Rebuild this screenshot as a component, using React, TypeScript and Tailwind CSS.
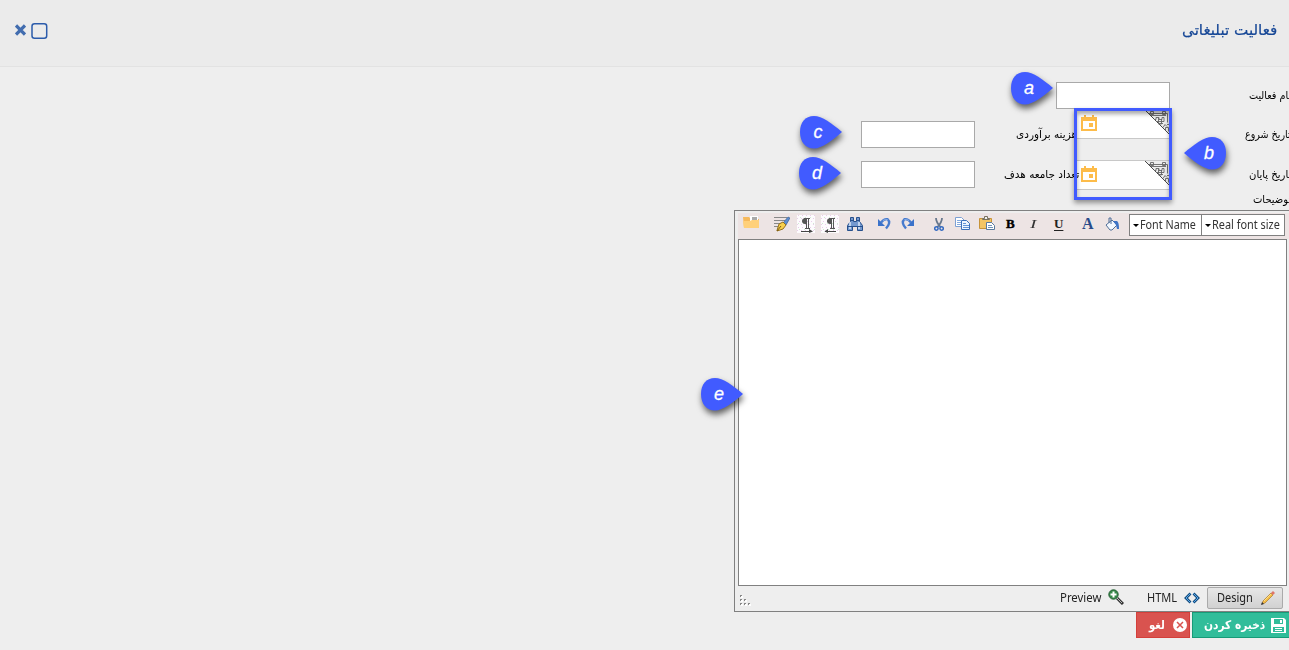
import React, { useLayoutEffect, useRef } from "react";

/* Persian or Latin text squeezed to a known line width. */
function Fit({ width, className = "", rtl = false, children }: { width: number; className?: string; rtl?: boolean; children: string }) {
  const ref = useRef<HTMLSpanElement>(null);
  useLayoutEffect(() => {
    const el = ref.current;
    if (el) el.style.transform = `scaleX(${width / el.offsetWidth})`;
  }, [width]);
  return (
    <span className="flex shrink-0" style={{ width }} dir="ltr">
      <span ref={ref} dir={rtl ? "rtl" : "ltr"} className={`shrink-0 origin-left whitespace-nowrap ${className}`}>
        {children}
      </span>
    </span>
  );
}

const fa = "font-['DejaVu_Sans',sans-serif]";

function Label({ width, children }: { width: number; children: string }) {
  return (
    <Fit rtl width={width} className={`${fa} text-[11px] leading-[15px] text-black`}>
      {children}
    </Fit>
  );
}

function Input() {
  return <input className="h-[27px] w-[114px] shrink-0 border border-[#a9a9a9] bg-white outline-none" />;
}

function DateField({ className = "" }: { className?: string }) {
  return (
    <div className={`flex h-[30px] w-[93px] items-start justify-between border-y border-[#c8c8c8] bg-white ${className}`}>
      <svg className="ml-1 mt-[5px]" width="16" height="16" viewBox="0 0 16 16">
        <path fill="#fdbc4a" fillRule="evenodd" d="M0 2h3V0h2v2h6V0h2v2h3v14H0zM2 6v8h12V6zM8 8h4v4H8z" />
      </svg>
      <svg width="25" height="25" viewBox="0 0 25 25" fill="none" stroke="#666" strokeWidth=".9">
        <path d="M0 0H25V25z" fill="#ececec" stroke="none" />
        <path d="M0 0 25 25" stroke="#333" />
        <path d="M4 3.500h18.500v9M6 5.500h15M5.500 1.500h3v3h-3zM17.500 1.500h3v3h-3zM9 9.500h2v-2h3v2h3v-2h2v4h-8M13.500 8v5M16.500 9v5h-3M13 13.500h5M18 17.500l2-3 2 2M20.500 20.500v-3h3v4M22 14.500h2" />
      </svg>
    </div>
  );
}

function Pin({ letter, flip = false, className }: { letter: string; flip?: boolean; className: string }) {
  return (
    <div className={`absolute h-[34px] w-[42px] ${className}`}>
      <svg
        className={flip ? "absolute inset-0 -scale-x-100 overflow-visible drop-shadow-[-1px_4px_3px_rgba(0,0,0,0.6)]" : "absolute inset-0 overflow-visible drop-shadow-[1px_4px_3px_rgba(0,0,0,0.6)]"}
        width="42"
        height="34"
        viewBox="0 0 42 34"
      >
        <path fill="#415bff" d="M42 16C32 24.500 22 32.500 14 32.500C5 32.500 0 25.500 0 16C0 6.500 5 0 14 0C22 0 32 7.500 42 16Z" />
      </svg>
      <span
        className={`absolute top-[6px] w-5 text-center font-['Liberation_Sans',sans-serif] text-[18px] italic leading-[20px] text-white [-webkit-text-stroke:0.3px_white] ${flip ? "left-[15px]" : "left-[8px]"}`}
      >
        {letter}
      </span>
    </div>
  );
}

function Folder() {
  return (
    <svg width="17" height="14" viewBox="0 0 17 14">
      <path fill="#f6b95b" d="M0 1h6l2 2h8v9H1z" />
      <path fill="#fff" d="M7 0h8v5H7z" />
      <path fill="#aaa" d="M9 1h5v3H9z" />
      <path fill="#ffd07a" d="M0 5h7l2-1h7v8H1z" />
    </svg>
  );
}
function FormatPen() {
  return (
    <svg width="16" height="16" viewBox="0 0 16 16">
      <path stroke="#888" d="M0 1.500h13M0 4.500h11M0 7.500h7M0 10.500h4" />
      <path fill="#5d8ed0" stroke="#294f88" strokeWidth=".6" d="M9 7 14 1l2 1-4 7z" />
      <path fill="#f7cf4c" stroke="#95701c" d="M3 14.500 5 8l4-2 3 3-3 4-6 2z" />
      <path stroke="#7b5a12" d="m3 15 4-5" />
    </svg>
  );
}
function Paragraph({ rtl = false }: { rtl?: boolean }) {
  return (
    <svg width="18" height="18" viewBox="0 0 18 18">
      <path fill="#fdfbfd" d="M0 0h18v18H0z" />
      <path stroke="#e8cdea" strokeDasharray="1 3" d="M1 .5h17M0 3.500h18M2 6.500h16M0 9.500h18M1 12.500h17M0 15.500h18" />
      <path stroke="#cfead2" strokeDasharray="1 4" d="M3 2.500h15M1 8.500h17M2 14.500h16" />
      <g transform={rtl ? "translate(1 0)" : undefined}>
        <path fill="#555" d="M9 3v6H8Q5 8.500 5 6T8 3z" />
        <path stroke="#555" d="M7 3.500h6M9.500 3v10M11.500 3v10M8 13.500h5" />
      </g>
      <path stroke="#444" d="M4 16.500h11" />
      <path fill="#444" d={rtl ? "M3.500 16.500 7 14v4z" : "M16 16.500 12 14v4z"} />
    </svg>
  );
}
function Binoculars() {
  return (
    <svg width="16" height="14" viewBox="0 0 16 14">
      <path fill="#7398cf" stroke="#28508c" d="M3.500.5h3v4h3v-4h3v4l3 4v5h-5v-4h-5v4h-5v-5l3-4z" />
      <path stroke="#dbe8fa" strokeWidth="1.500" d="M3 5v7M12 5v7" />
      <path stroke="#28508c" d="M1 9.500h5M10 9.500h5M3 3.500h4M9 3.500h4" />
    </svg>
  );
}
function Turn({ redo = false }: { redo?: boolean }) {
  return (
    <svg width="13" height="13" viewBox="0 0 13 13" className={redo ? "-scale-x-100" : ""}>
      <path fill="none" stroke="#477bce" strokeWidth="2.400" d="M3 5.500Q6 1.500 9.500 2.200Q13.500 5.500 8 11.500" />
      <path fill="#3b72ca" d="M0 2v7h7z" />
      <path fill="none" stroke="#8db1e7" d="M5 3.500Q8 1.500 10 3" />
    </svg>
  );
}
function Scissors() {
  return (
    <svg width="10" height="15" viewBox="0 0 10 15" fill="none">
      <path stroke="#68788d" strokeWidth="1.800" d="M2 1q0 4 4.500 9M8 1q0 4-4.500 9" />
      <circle cx="2.400" cy="11.500" r="1.700" stroke="#3269c1" strokeWidth="1.500" />
      <circle cx="7.600" cy="11.500" r="1.700" stroke="#3269c1" strokeWidth="1.500" />
    </svg>
  );
}
function Copy() {
  return (
    <svg width="16" height="13" viewBox="0 0 16 13">
      <path fill="#fff" stroke="#7da0d3" d="M.5.5h6l3 3v6h-9z" />
      <path stroke="#83a9de" d="M2 3.500h4M2 5.500h5M2 7.500h5" />
      <path fill="#eff6ff" stroke="#3c70b9" d="M6.500 3.500h5l3 3v6h-8z" />
      <path stroke="#6594d5" d="M8 6.500h3M8 8.500h6M8 10.500h6" />
    </svg>
  );
}
function Paste() {
  return (
    <svg width="17" height="15" viewBox="0 0 17 15">
      <path fill="#f4c564" stroke="#c79338" d="M.5 2.500h12v10H.5z" />
      <path fill="#eee" stroke="#77715f" d="M3.500 3.500v-1h2v-2h3v2h2v1z" />
      <path fill="#fff" stroke="#58799e" d="M7.500 6.500h5l3 3v4h-8z" />
      <path stroke="#7093ba" d="M9 9.500h4M9 11.500h5" />
    </svg>
  );
}
function Bucket() {
  return (
    <svg width="14" height="14" viewBox="0 0 14 14">
      <path fill="#f3f8ff" stroke="#506f98" d="m1 8 6-5 5 5-5 5H5z" />
      <path stroke="#4c6d98" fill="none" d="M4 6V1h2v6" />
      <path fill="#3f74c6" d="M8 4h4q2 1 2 8h-2L11 8z" />
    </svg>
  );
}

function Select({ width, children, className }: { width: number; children: string; className: string }) {
  return (
    <div className={`flex h-[22px] items-center border border-[#808080] bg-white pl-[3px] ${className}`}>
      <span className="mr-px mt-px border-x-[3px] border-t-[3px] border-x-transparent border-t-black" />
      <Fit width={width} className="font-['Noto_Sans',sans-serif] text-[12.5px] leading-[18px] text-[#333]">{children}</Fit>
    </div>
  );
}

function Toolbar() {
  const serif = "font-['Liberation_Serif',serif] font-bold leading-[14px]";
  return (
    <div className="flex h-[26px] items-center bg-[#ede4e4] pl-[5px]">
      <div className="mr-[14px] -mt-[6px]"><Folder /></div>
      <div className="mr-[7px] -mt-[5px]"><FormatPen /></div>
      <div className="mr-[6px] -mt-1"><Paragraph /></div>
      <div className="mr-[8px] -mt-1"><Paragraph rtl /></div>
      <div className="mr-[15px] -mt-[5px]"><Binoculars /></div>
      <div className="mr-[10px] -mt-[5px]"><Turn /></div>
      <div className="mr-[20px] -mt-[5px]"><Turn redo /></div>
      <div className="mr-[11px] -mt-1"><Scissors /></div>
      <div className="mr-[8px] -mt-[5px]"><Copy /></div>
      <div className="mr-[10px] -mt-[5px]"><Paste /></div>
      <span className={`mr-[15px] -mt-1 w-[9px] text-[13px] text-black [-webkit-text-stroke:0.4px_black] ${serif}`}>B</span>
      <span className={`mr-[15px] -mt-1 w-[9px] text-[13px] italic text-[#333] ${serif}`}><span className="inline-block origin-left scale-x-150 font-normal">I</span></span>
      <span className={`mr-[19px] -mt-1 w-[9px] text-[13px] text-[#222] underline underline-offset-2 ${serif}`}>U</span>
      <span className={`mr-[11px] -mt-1 w-[12px] text-[16px] text-[#294b89] ${serif}`}>A</span>
      <div className="mr-[10px] -mt-1 w-[14px]"><Bucket /></div>
      <Select className="-mt-[2px] w-[73px] shrink-0" width={56}>Font Name</Select>
      <Select className="-ml-px -mt-[2px] w-[84px] shrink-0" width={68}>Real font size</Select>
    </div>
  );
}

function EditorFooter() {
  const text = "font-['Noto_Sans',sans-serif] text-[12.5px] leading-[18px] text-[#222]";
  return (
    <div className="flex h-[24px] items-center">
      <svg className="ml-[2px] mt-[4px]" width="11" height="11" viewBox="0 0 11 11">
        <path fill="#fff" d="M1 1h2v2H1zM1 5h2v2H1zM5 5h2v2H5zM1 9h2v2H1zM5 9h2v2H5zM9 9h2v2H9z" />
        <path fill="#888" d="M0 0h2v1H1v1H0zM0 4h2v1H1v1H0zM4 4h2v1H5v1H4zM0 8h2v1H1v1H0zM4 8h2v1H5v1H4zM8 8h2v1H9v1H8z" />
      </svg>
      <div className="ml-[309px] flex items-center">
        <Fit width={41} className={text}>Preview</Fit>
        <svg className="-mt-[2px] ml-[7px] mr-[23px]" width="16" height="16" viewBox="0 0 16 16">
          <path stroke="#333" strokeWidth="3" d="m9 9 6 6" /><path stroke="#bbb" d="m9 9 5 5" />
          <circle cx="5.500" cy="5.500" r="4.700" fill="#368849" stroke="#276035" />
          <path stroke="#fff" strokeWidth="2" d="M2.500 5.500h6M5.500 2.500v6" />
        </svg>
        <Fit width={30} className={text}>HTML</Fit>
        <svg className="ml-[7px] mr-[7px]" width="16" height="12" viewBox="0 0 16 12" fill="none">
          <path stroke="#164e80" strokeWidth="2.800" d="M6.500 1.500 2 6l4.500 4.500M9.500 1.500 14 6l-4.500 4.500" /><path stroke="#57a7e8" strokeWidth="1" d="M6.500 1.500 2 6l4.500 4.500M9.500 1.500 14 6l-4.500 4.500" />
        </svg>
        <div className="flex h-[22px] w-[76px] items-center rounded-[2px] border border-[#aaa] bg-linear-to-b from-[#e7e7e7] to-[#d1d1d1] pl-[9px]">
          <Fit width={36} className={text}>Design</Fit>
          <svg className="ml-[8px]" width="14" height="14" viewBox="0 0 14 14">
            <path fill="#f4bd45" stroke="#a97931" strokeWidth=".7" d="M2 10 10 2l2 2-8 8-3 1z" />
            <path fill="#df7569" d="m10 2 2-2 2 2-2 2z" /><path fill="#333" d="m0 14 1-3 2 2z" />
            <path stroke="#ffe18a" d="m3 10 7-7" />
          </svg>
        </div>
      </div>
    </div>
  );
}

export default function App() {
  return (
    <div className="relative h-[650px] w-[1289px] overflow-hidden bg-[#eeeeee]">
      <header className="flex h-[67px] items-start justify-between border-b border-[#e2e2e2] bg-[#ebebeb]">
        <div className="flex pl-[15px] pt-[23px]">
          <svg className="mt-px" width="11" height="12" viewBox="0 0 11 12"><path stroke="#426daf" strokeWidth="3.200" d="m1 1.500 9 9M10 1.500l-9 9" /></svg>
          <svg className="ml-[5px]" width="17" height="16" viewBox="0 0 17 16"><rect x="1" y=".8" width="14.700" height="14.400" rx="2.500" fill="none" stroke="#2c5cab" strokeWidth="1.500" /></svg>
        </div>
        <div className="pr-[12px] pt-[19px]">
          <Fit rtl width={95} className={`${fa} text-[15px] leading-[22px] text-[#164796] [-webkit-text-stroke:0.2px_#164796]`}>فعالیت تبلیغاتی</Fit>
        </div>
      </header>

      <main>
        <div className="flex flex-col pt-[15px]">
          <div className="flex h-[27px] items-center pl-[1056px]">
            <Input />
            <div className="ml-[79px] shrink-0"><Label width={42}>نام فعالیت</Label></div>
          </div>
          <div className="mt-[12px] flex h-[27px] items-center pl-[861px]">
            <Input />
            <div className="ml-[41px] shrink-0"><Label width={61}>هزینه برآوردی</Label></div>
            <DateField className="-mt-[22px] shrink-0" />
            <div className="ml-[75px] shrink-0"><Label width={46}>تاریخ شروع</Label></div>
          </div>
          <div className="mt-[13px] flex h-[27px] items-center pl-[861px]">
            <Input />
            <div className="ml-[29px] shrink-0"><Label width={75}>تعداد جامعه هدف</Label></div>
            <DateField className="-ml-[2px] shrink-0" />
            <div className="ml-[79px] shrink-0"><Label width={42}>تاریخ پایان</Label></div>
          </div>
          <div className="mb-[3px] mt-[3px] flex h-[16px] items-center pl-[1253px]">
            <Label width={38}>توضیحات</Label>
          </div>
        </div>

        <section className="ml-[734px] h-[402px] w-[560px] border border-[#808080] pl-[3px] pt-[2px]">
          <Toolbar />
          <div className="h-[347px] w-[549px] border border-[#808080] bg-white" />
          <EditorFooter />
        </section>

        <div className="flex gap-[2px] pl-[1136px]">
          <button className="flex h-[26px] w-[54px] shrink-0 items-center border border-[#d43f3a] bg-[#d9534f] pl-[12px]">
            <Fit rtl width={16} className={`${fa} text-[12px] font-bold leading-[18px] text-white`}>لغو</Fit>
            <svg className="ml-[8px] shrink-0" width="14" height="14" viewBox="0 0 14 14">
              <circle cx="7" cy="7" r="7" fill="#fff" /><path stroke="#d9534f" strokeWidth="1.500" d="m4 4 6 6M10 4l-6 6" />
            </svg>
          </button>
          <button className="flex h-[26px] w-[102px] shrink-0 items-center border border-[#169b78] bg-[#31bd9a] pl-[11px]">
            <Fit rtl width={61} className={`${fa} text-[12px] font-bold leading-[18px] text-white`}>ذخیره کردن</Fit>
            <svg className="ml-[6px] shrink-0" width="15" height="15" viewBox="0 0 15 15">
              <path fill="#fff" fillRule="evenodd" d="M0 0h13l2 2v13H0zM3 1v5h9V1zM2 9v5h11V9zM9 2h2v3H9z" /><path stroke="#fff" d="M4 10.500h7M4 12.500h7" />
            </svg>
          </button>
        </div>
      </main>

      <div className="absolute left-[1074px] top-[108px] h-[92px] w-[98px] border-[3px] border-[#415bff] shadow-[0_3px_5px_rgba(0,0,0,0.4),inset_0_3px_4px_rgba(0,0,0,0.35)]" />
      <Pin letter="a" className="left-[1011px] top-[72px]" />
      <Pin letter="b" flip className="left-[1184px] top-[137px]" />
      <Pin letter="c" className="left-[800px] top-[116px]" />
      <Pin letter="d" className="left-[799px] top-[157px]" />
      <Pin letter="e" className="left-[701px] top-[378px]" />
    </div>
  );
}
